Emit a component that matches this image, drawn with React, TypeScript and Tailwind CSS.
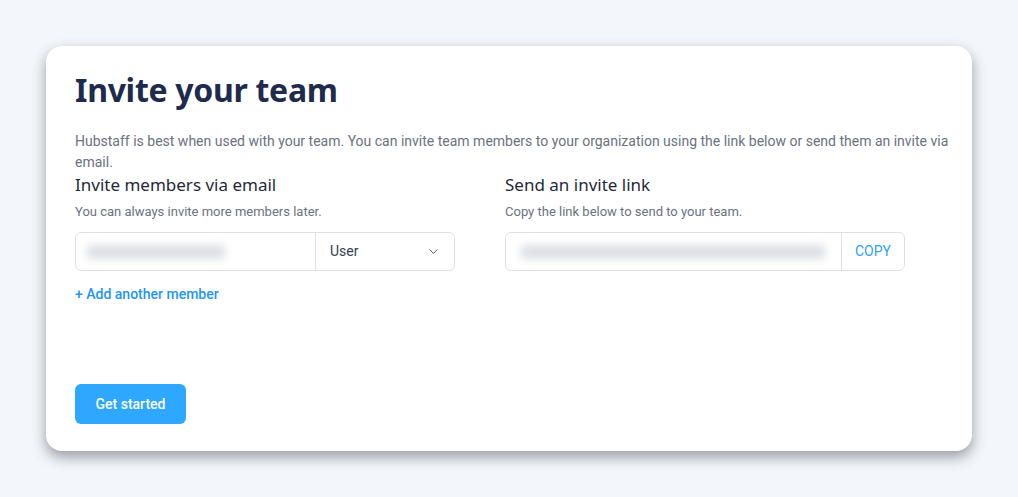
import { ChevronDown } from "lucide-react";

export default function App() {
  return (
    <div className="min-h-[497px] w-full bg-[#f3f6fa] px-[46px] pt-[46px] font-['Roboto',sans-serif]">
      <div className="flex h-[405px] w-[926px] flex-col rounded-[16px] bg-white pl-[29px] pr-[20px] pt-[22px] shadow-[0_6px_14px_rgba(40,44,56,0.45)]">
        <h1 className="font-['Noto_Sans',sans-serif] text-[32px] font-bold leading-[44px] tracking-[-0.3px] text-[#1f2b4d]">
          Invite your team
        </h1>
        <p className="mt-[19px] text-[14px] leading-[21px] text-[#6b7280]">
          Hubstaff is best when used with your team. You can invite team members to your organization using the link below or send them an invite via email.
        </p>

        <div className="grid grid-cols-[430px_1fr]">
          <div>
            <h2 className="font-['Noto_Sans',sans-serif] text-[17px] leading-[24px] text-[#1f2937]">
              Invite members via email
            </h2>
            <p className="mt-[7px] text-[13px] leading-[16px] text-[#6b7280]">
              You can always invite more members later.
            </p>
            <div className="mt-[12px] flex h-[39px] w-[380px] rounded-[6px] border border-[#dde1e7]">
              <div className="flex flex-1 items-center px-[10px]">
                <div className="h-[14px] w-[140px] rounded-full bg-[#dcdfe3] blur-[4px]" />
              </div>
              <div className="flex w-[139px] items-center justify-between border-l border-[#dde1e7] pl-[14px] pr-[13px] text-[14px] text-[#374151]">
                <span>User</span>
                <ChevronDown size={15} strokeWidth={1.6} className="text-[#4b5563]" />
              </div>
            </div>
            <div className="mt-[13px] text-[14px] font-medium text-[#2196f3]">+ Add another member</div>
          </div>
          <div>
            <h2 className="font-['Noto_Sans',sans-serif] text-[17px] leading-[24px] text-[#1f2937]">
              Send an invite link
            </h2>
            <p className="mt-[7px] text-[13px] leading-[16px] text-[#6b7280]">
              Copy the link below to send to your team.
            </p>
            <div className="mt-[12px] flex h-[39px] w-[400px] rounded-[6px] border border-[#dde1e7]">
              <div className="flex flex-1 items-center px-[14px]">
                <div className="h-[14px] w-[306px] rounded-full bg-[#dcdfe3] blur-[4px]" />
              </div>
              <div className="flex w-[63px] items-center justify-center border-l border-[#dde1e7] text-[14px] text-[#2ea3f2]">
                COPY
              </div>
            </div>
          </div>
        </div>

        <div className="mt-auto pb-[27px]">
          <button className="h-[40px] w-[111px] rounded-[6px] bg-[#2ea8ff] text-[14px] font-medium text-white">
            Get started
          </button>
        </div>
      </div>
    </div>
  );
}
